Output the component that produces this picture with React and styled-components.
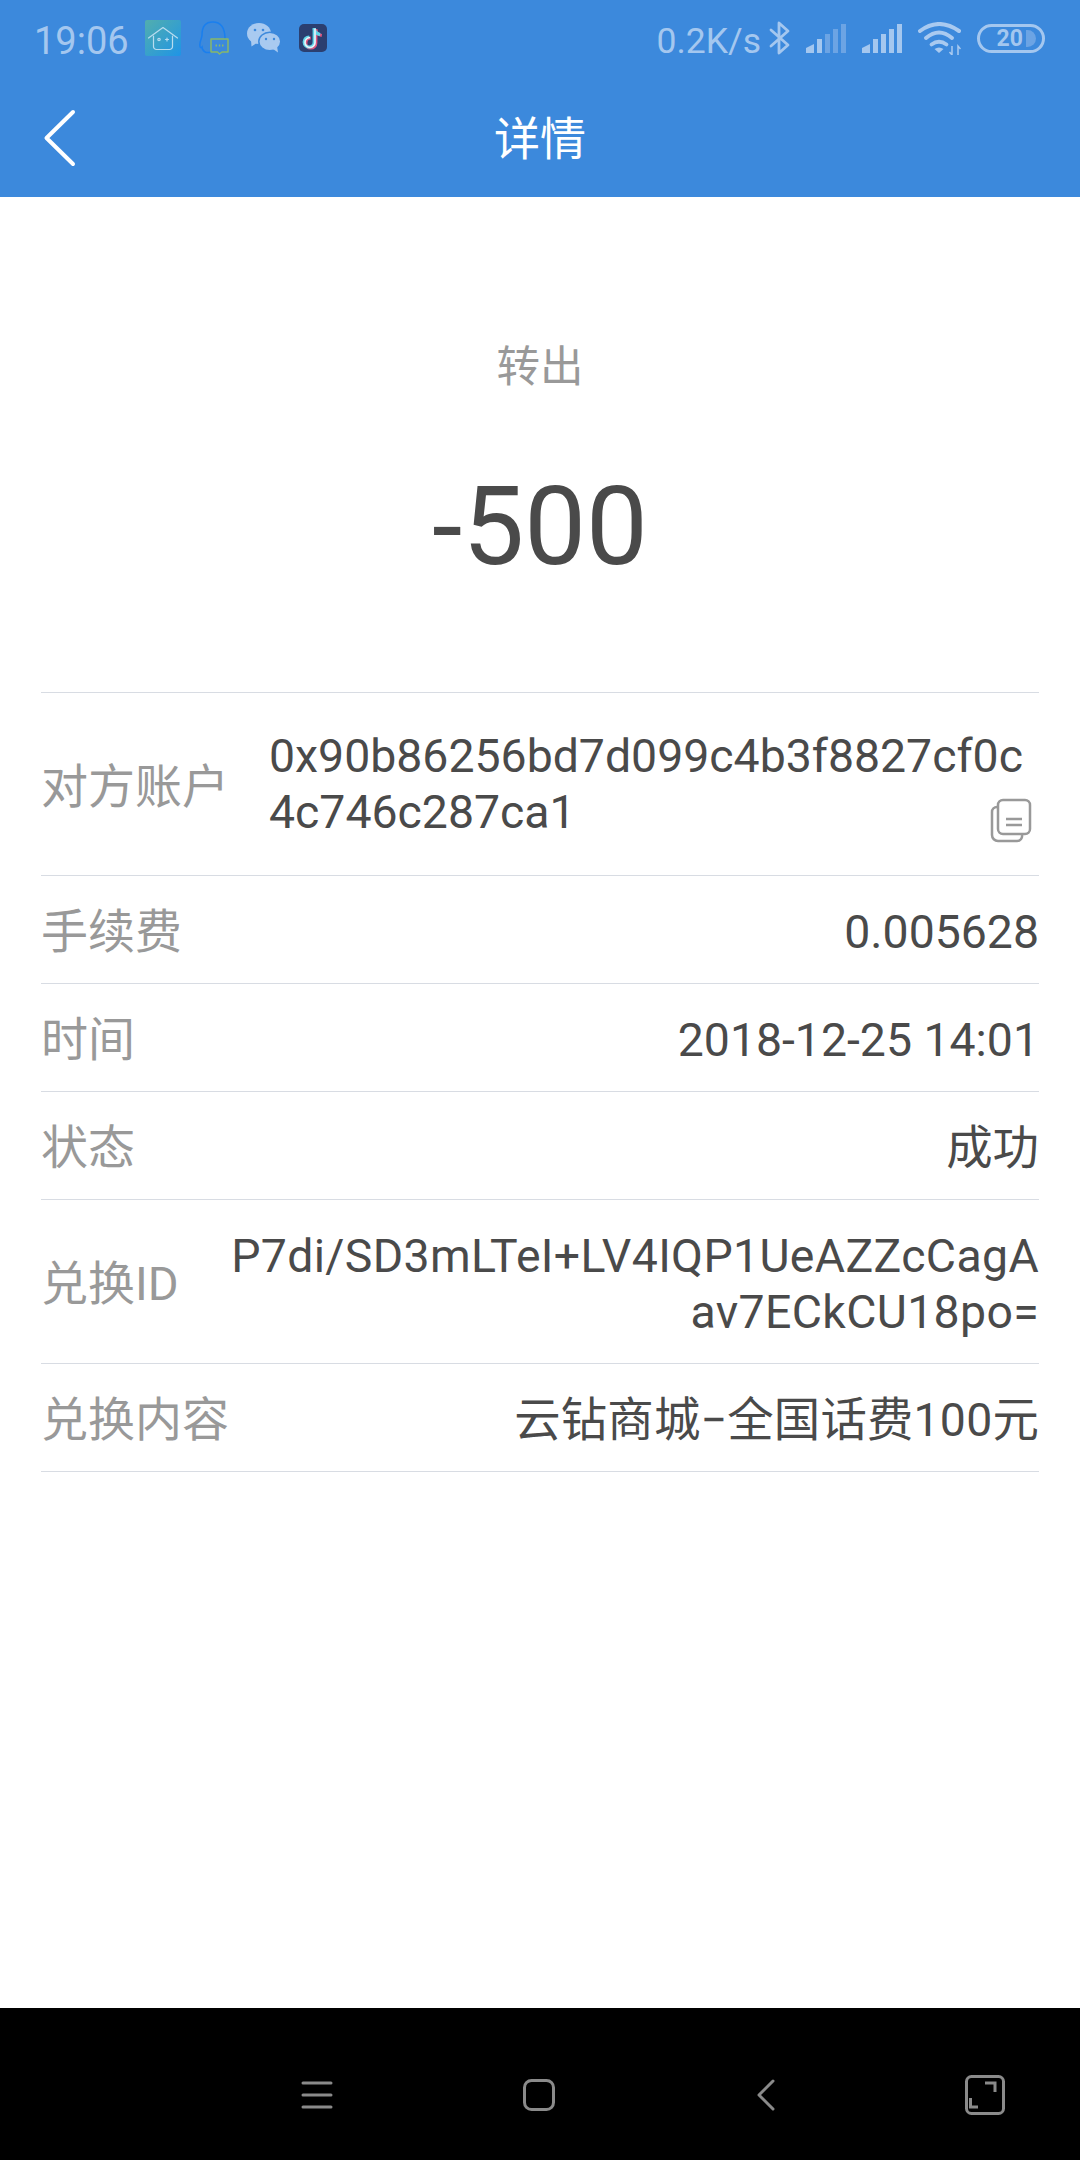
import React from "react";
import styled, { createGlobalStyle } from "styled-components";

const rows = [
  { label: "手续费", value: "0.005628" },
  { label: "时间", value: "2018-12-25 14:01" },
  { label: "状态", value: "成功" },
  { label: "兑换ID", value: "P7di/SD3mLTeI+LV4IQP1UeAZZcCagAav7ECkCU18po=", spacing: 0.35 },
  { label: "兑换内容", value: "云钻商城−全国话费100元", spacing: 0.2 },
];

const App = () => {
  return (
    <Page>
      <GlobalStyle />
      <Header>
        <StatusBar>
          <StatusGroup>
            <Clock>19:06</Clock>
            <HomeAppIcon />
            <QQIcon />
            <WeChatIcon />
            <TikTokIcon />
          </StatusGroup>
          <StatusRight>
            <Speed>0.2K/s</Speed>
            <BluetoothIcon />
            <SignalIcon dim />
            <SignalIcon />
            <WifiIcon />
            <BatteryIcon />
          </StatusRight>
        </StatusBar>
        <TitleBar>
          <BackButton>
            <svg width="34" height="60" viewBox="0 0 34 60" fill="none">
              <path d="M30 4 L3.500 30 L30 56" stroke="#fff" strokeWidth="4" strokeLinecap="round" strokeLinejoin="round" />
            </svg>
          </BackButton>
          <Title>详情</Title>
        </TitleBar>
      </Header>

      <Main>
        <Hero>
          <HeroType>转出</HeroType>
          <Amount>-500</Amount>
        </Hero>
        <List>
          <Row $tall>
            <Label $low>对方账户</Label>
            <Address>
              0x90b86256bd7d099c4b3f8827cf0c4c746c287ca1
              <CopyButton>
                <svg width="42" height="46" viewBox="0 0 42 46" fill="none" stroke="#999" strokeWidth="2.500">
                  <rect x="8" y="2" width="32" height="34" rx="5" />
                  <path d="M8 9 H7 A5 5 0 0 0 2 14 V37 A6 6 0 0 0 8 43 H27 A5 5 0 0 0 32 37" />
                  <path d="M16 21 H32 M16 27 H32" />
                </svg>
              </CopyButton>
            </Address>
          </Row>
          {rows.map((r) => (
            <Row key={r.label}>
              <Label>{r.label}</Label>
              <Value $spacing={r.spacing}>{r.value}</Value>
            </Row>
          ))}
        </List>
      </Main>

      <NavBar>
        <NavSlot>
          <svg width="32" height="28" viewBox="0 0 32 28" fill="none" stroke="#8a8a8a" strokeWidth="3" strokeLinecap="round">
            <path d="M2 2 H30 M2 14 H30 M2 26 H30" />
          </svg>
        </NavSlot>
        <NavSlot>
          <svg width="32" height="32" viewBox="0 0 32 32" fill="none" stroke="#8a8a8a" strokeWidth="3">
            <rect x="1.500" y="1.500" width="29" height="29" rx="7" />
          </svg>
        </NavSlot>
        <NavSlot>
          <svg width="18" height="32" viewBox="0 0 18 32" fill="none" stroke="#8a8a8a" strokeWidth="3" strokeLinecap="round" strokeLinejoin="round">
            <path d="M16 2 L2 16 L16 30" />
          </svg>
        </NavSlot>
        <NavSlot>
          <svg width="40" height="40" viewBox="0 0 40 40" fill="none" stroke="#8a8a8a" strokeWidth="3">
            <rect x="1.500" y="1.500" width="37" height="37" rx="5" />
            <path d="M20 8 H30 V17 M5.500 23 V32 H13" />
          </svg>
        </NavSlot>
      </NavBar>
    </Page>
  );
};

export default App;

const HomeAppIcon = () => (
  <svg width="36" height="36" viewBox="0 0 36 36" fill="none">
    <defs>
      <linearGradient id="tile" x1="0" y1="0" x2="1" y2="1">
        <stop offset="0" stopColor="#52aeae" />
        <stop offset="1" stopColor="#1f94e6" />
      </linearGradient>
    </defs>
    <rect width="36" height="36" rx="2" fill="url(#tile)" />
    <g stroke="#b9dcef" strokeWidth="1.200" strokeLinecap="round" strokeLinejoin="round">
      <path d="M3.500 18 L18 7.500 L32.500 18" />
      <path d="M8.500 16 V26.500 A3 3 0 0 0 11.500 29.500 H24.500 A3 3 0 0 0 27.500 26.500 V16" />
      <circle cx="14" cy="19.500" r="1.200" />
      <path d="M20.500 19.500 H23.500 M22 18 V21" />
    </g>
  </svg>
);

const QQIcon = () => (
  <svg width="30" height="34" viewBox="0 0 30 34" fill="none">
    <path
      d="M26 18 C26 12 25 1 13.700 1 C4.500 1 3 9 3 14 C3 17 0.800 20 0.800 24 C0.800 27 2 27 3 26 C3 28 4.500 30 6 31 C8 31.800 10 31.800 12 31"
      stroke="#1a7fee"
      strokeWidth="1.500"
      strokeLinecap="round"
    />
    <path d="M12 18 H29 V31 H23 L20.500 33 L18.500 31 H12 Z" fill="#3c89dc" stroke="#88b868" strokeWidth="1.500" strokeLinejoin="round" />
    <path d="M16.500 24.500 H18 M19.800 24.500 H21.300 M23 24.500 H24.500" stroke="#88b868" strokeWidth="1.800" />
  </svg>
);

const WeChatIcon = () => (
  <svg width="34" height="30" viewBox="0 0 34 30" fill="none">
    <ellipse cx="12" cy="10.500" rx="12" ry="10.500" fill="#a9caf0" />
    <path d="M4 17 L4.500 23.500 L11 19 Z" fill="#a9caf0" />
    <ellipse cx="22.800" cy="18.500" rx="11" ry="9.200" stroke="#3c89dc" strokeWidth="1.500" fill="#a9caf0" />
    <path d="M26 26 L31 29.500 L30 23 Z" fill="#a9caf0" />
    <circle cx="8" cy="7" r="1.300" fill="#3c89dc" />
    <circle cx="16" cy="7" r="1.300" fill="#3c89dc" />
    <circle cx="19" cy="16" r="1.200" fill="#3c89dc" />
    <circle cx="27" cy="16" r="1.200" fill="#3c89dc" />
  </svg>
);

const TikTokIcon = () => (
  <svg width="28" height="28" viewBox="0 0 28 28" fill="none">
    <rect width="28" height="28" rx="5" fill="#2b3f70" />
    <g strokeWidth="3.200">
      <path d="M16.800 5 V19 A5 5 0 1 1 11.800 14" stroke="#e2557e" />
      <path d="M16.800 5.500 C17 9 19.500 11 22.800 11.500" stroke="#e2557e" />
      <path d="M15.200 4 V18 A5 5 0 1 1 10.200 13" stroke="#5fd6ea" />
      <path d="M15.200 4.500 C15.500 8 18 10 21.200 10.500" stroke="#5fd6ea" />
      <path d="M16 4.500 V18.500 A5 5 0 1 1 11 13.500" stroke="#eef2f8" strokeWidth="1.600" />
    </g>
  </svg>
);

const BluetoothIcon = () => (
  <svg width="21" height="34" viewBox="0 0 21 34" fill="none">
    <path d="M2 9 L19 24 L10 32 V2 L19 10 L2 25" stroke="#a4c7ef" strokeWidth="2.800" strokeLinejoin="round" strokeLinecap="round" />
  </svg>
);

const SignalIcon = ({ dim }) => (
  <svg width="40" height="29" viewBox="0 0 40 29">
    <path d="M0 29 V24 L8 20 V29 Z" fill="#a4c7ef" />
    <rect x="11" y="15" width="5" height="14" fill="#a4c7ef" />
    <rect x="19" y="10" width="5" height="19" fill={dim ? "#6ca4e4" : "#a4c7ef"} />
    <rect x="27" y="5" width="5" height="24" fill={dim ? "#6ca4e4" : "#a4c7ef"} />
    <rect x="35" y="0" width="5" height="29" fill={dim ? "#6ca4e4" : "#a4c7ef"} />
  </svg>
);

const WifiIcon = () => (
  <svg width="43" height="33" viewBox="0 0 43 33" fill="none">
    <path d="M2 9 Q21 -5 41 9" stroke="#a9caf0" strokeWidth="4" strokeLinecap="round" />
    <path d="M8 16 Q21 5 34 16" stroke="#a9caf0" strokeWidth="4" strokeLinecap="round" />
    <path d="M13.500 22.500 Q21 17 28.500 22.500" stroke="#a9caf0" strokeWidth="3.800" strokeLinecap="round" />
    <path d="M16.500 27 Q21 24 25.500 27 L21 31 Z" fill="#a9caf0" />
    <path d="M34 24 V33 L31.500 30 M40 33 V24 L42.500 27" stroke="#a9caf0" strokeWidth="1.500" />
  </svg>
);

const BatteryIcon = () => (
  <BatteryBox>
    <BatteryText>20</BatteryText>
    <BatteryFill />
  </BatteryBox>
);

const GlobalStyle = createGlobalStyle`
  html, body {
    margin: 0;
    padding: 0;
    background: #fff;
  }
  * {
    box-sizing: border-box;
  }
`;

const Page = styled.div`
  width: 1080px;
  height: 2160px;
  display: flex;
  flex-direction: column;
  overflow: hidden;
  font-family: Roboto, "Noto Sans CJK SC", sans-serif;
`;

const Header = styled.header`
  height: 197px;
  background-color: #3c89dc;
`;

const StatusBar = styled.div`
  height: 76px;
  padding: 0 35px 0 34px;
  display: flex;
  justify-content: space-between;
  align-items: center;
`;

const StatusGroup = styled.div`
  display: flex;
  align-items: center;
  gap: 18px;
`;

const StatusRight = styled.div`
  display: flex;
  align-items: center;
  gap: 16px;
`;

const Clock = styled.span`
  width: 93px;
  padding-top: 5px;
  font-size: 38px;
  color: #a4c7ef;
`;

const Speed = styled.span`
  padding-top: 5px;
  margin-right: -8px;
  font-size: 35.500px;
  color: #a4c7ef;
`;

const BatteryBox = styled.div`
  width: 68px;
  height: 29px;
  border: 3px solid #a4c7ef;
  border-radius: 15px;
  display: flex;
  align-items: center;
  justify-content: flex-end;
  padding-right: 6px;
`;

const BatteryText = styled.span`
  font-size: 23px;
  font-weight: 700;
  color: #a4c7ef;
  margin-right: 3px;
`;

const BatteryFill = styled.span`
  width: 10px;
  height: 17px;
  background: #6ca4e4;
  border-radius: 0 9px 9px 0;
`;

const TitleBar = styled.div`
  height: 121px;
  padding-bottom: 4px;
  display: grid;
  grid-template-columns: 1fr auto 1fr;
  align-items: center;
`;

const BackButton = styled.div`
  padding: 6px 0 0 43px;
  display: flex;
  align-items: center;
`;

const Title = styled.h1`
  margin: 0;
  font-size: 46px;
  font-weight: 400;
  color: #fff;
`;

const Main = styled.main`
  flex: 1;
  padding: 0 41px;
`;

const Hero = styled.section`
  height: 495px;
  padding-top: 141px;
  display: flex;
  flex-direction: column;
  align-items: center;
`;

const HeroType = styled.div`
  font-size: 43.500px;
  line-height: 60px;
  color: #999;
`;

const Amount = styled.div`
  margin-top: 64px;
  font-size: 110px;
  line-height: 130px;
  color: #4a4a4a;
`;

const List = styled.div`
  border-top: 1px solid #d8dce3;
`;

const Row = styled.div`
  display: flex;
  justify-content: space-between;
  align-items: center;
  gap: 40px;
  padding: ${(p) => (p.$tall ? "35px 0" : "28px 0 23px")};
  border-bottom: 1px solid #d8dce3;
  font-size: 46.400px;
  line-height: 56px;
`;

const Label = styled.span`
  flex: none;
  padding-top: ${(p) => (p.$low ? "5px" : "0")};
  font-size: 47px;
  color: #999;
`;

const Value = styled.span`
  color: #4a4a4a;
  text-align: right;
  word-break: break-all;
  letter-spacing: ${(p) => p.$spacing || 0}px;
`;

const Address = styled.span`
  position: relative;
  flex: none;
  width: 777px;
  color: #4a4a4a;
  word-break: break-all;
`;

const CopyButton = styled.span`
  position: absolute;
  right: 14px;
  bottom: -4px;
  line-height: 0;
`;

const NavBar = styled.nav`
  height: 152px;
  padding: 22px 0 0 287px;
  background: #000;
  display: grid;
  grid-template-columns: 222px 227px 219px 60px;
  align-items: center;
`;

const NavSlot = styled.div`
  width: 60px;
  display: flex;
  justify-content: center;
`;
